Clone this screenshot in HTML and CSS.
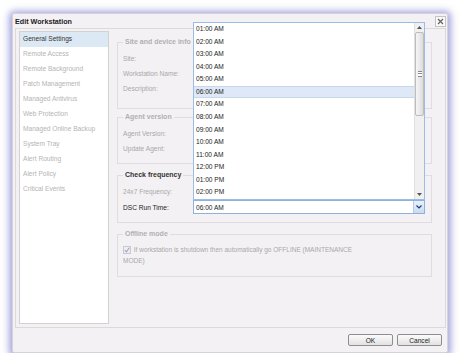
FILE: index.html
```html
<!DOCTYPE html>
<html lang="en">
<head>
    <meta charset="UTF-8">
    <title>Edit Workstation</title>
    <link rel="stylesheet" href="styles.css">
</head>
<body>
    <div class="window">
        <div class="titlebar">
            <span class="title">Edit Workstation</span>
            <span class="close-btn">
                <svg width="7" height="7" viewBox="0 0 7 7"><path d="M1 1 L6 6 M6 1 L1 6" stroke="#666" stroke-width="1.3"/></svg>
            </span>
        </div>

        <div class="dialog-body">
            <ul class="nav">
                <li class="active">General Settings</li>
                <li>Remote Access</li>
                <li>Remote Background</li>
                <li>Patch Management</li>
                <li>Managed Antivirus</li>
                <li>Web Protection</li>
                <li>Managed Online Backup</li>
                <li>System Tray</li>
                <li>Alert Routing</li>
                <li>Alert Policy</li>
                <li>Critical Events</li>
            </ul>

            <div class="content">
                <fieldset class="fs fs-site">
                    <legend>Site and device info</legend>
                    <div class="row">Site:</div>
                    <div class="row">Workstation Name:</div>
                    <div class="row">Description:</div>
                </fieldset>

                <fieldset class="fs fs-agent">
                    <legend>Agent version</legend>
                    <div class="row">Agent Version:</div>
                    <div class="row">Update Agent:</div>
                </fieldset>

                <fieldset class="fs fs-check">
                    <legend>Check frequency</legend>
                    <div class="row row-tall">24x7 Frequency:</div>
                    <div class="row row-combo">
                        <span class="field-label">DSC Run Time:</span>
                        <div class="combo">
                            <span class="combo-value">06:00 AM</span>
                            <span class="combo-trigger">
                                <svg width="6" height="4" viewBox="0 0 6 4"><path d="M0.5 0.5 L3 3 L5.5 0.5" fill="none" stroke="#1e3f7a" stroke-width="1.2"/></svg>
                            </span>
                        </div>
                    </div>
                </fieldset>

                <fieldset class="fs fs-offline">
                    <legend>Offline mode</legend>
                    <div class="check-line">
                        <span class="checkbox">
                            <svg width="6" height="6" viewBox="0 0 6 6"><path d="M0.8 3.2 L2.4 4.8 L5.3 0.8" fill="none" stroke="#9aa7c4" stroke-width="1.1"/></svg>
                        </span>
                        If workstation is shutdown then automatically go OFFLINE (MAINTENANCE MODE)
                    </div>
                </fieldset>
            </div>
        </div>

        <div class="footer">
            <button class="btn">OK</button>
            <button class="btn">Cancel</button>
        </div>

        <div class="picker">
            <ul class="picker-list">
                <li>01:00 AM</li>
                <li>02:00 AM</li>
                <li>03:00 AM</li>
                <li>04:00 AM</li>
                <li>05:00 AM</li>
                <li class="selected">06:00 AM</li>
                <li>07:00 AM</li>
                <li>08:00 AM</li>
                <li>09:00 AM</li>
                <li>10:00 AM</li>
                <li>11:00 AM</li>
                <li>12:00 PM</li>
                <li>01:00 PM</li>
                <li>02:00 PM</li>
            </ul>
            <div class="scrollbar">
                <span class="scroll-arrow">
                    <svg width="5" height="3" viewBox="0 0 5 3"><path d="M0 3 L2.5 0 L5 3 Z" fill="#555"/></svg>
                </span>
                <span class="scroll-thumb"><span class="grip"></span></span>
                <span class="scroll-track"></span>
                <span class="scroll-arrow">
                    <svg width="5" height="3" viewBox="0 0 5 3"><path d="M0 0 L2.5 3 L5 0 Z" fill="#555"/></svg>
                </span>
            </div>
        </div>
    </div>
</body>
</html>
```

FILE: styles.css
```css
body {
    margin: 0;
    background: #ffffff;
    font-family: "Liberation Sans", Arial, sans-serif;
    font-size: 6.6px;
    color: #333;
}
.window {
    position: relative;
    margin: 13px 0 0 12px;
    width: 436px;
    height: 340px;
    box-sizing: border-box;
    border: 1px solid #d6d2dc;
    border-radius: 2px;
    background: #f4f1f4;
    box-shadow: 0 1px 7px 3px rgba(105, 105, 200, 0.6);
}
.titlebar {
    height: 14px;
    display: flex;
    align-items: center;
    justify-content: space-between;
    padding: 0 1px 0 2px;
}
.title {
    font-weight: bold;
    font-size: 7.2px;
    color: #222;
}
.close-btn {
    width: 11px;
    height: 11px;
    box-sizing: border-box;
    border: 1px solid #c4c4c4;
    background: #fafafa;
    display: flex;
    align-items: center;
    justify-content: center;
}
.dialog-body {
    margin: 0 1px 0 2px;
    height: 300px;
    box-sizing: border-box;
    border: 1px solid #dcd8dc;
    padding: 2px 0 3px 3px;
    display: flex;
}
.nav {
    list-style: none;
    margin: 0;
    padding: 0;
    width: 90px;
    box-sizing: border-box;
    border: 1px solid #d2d2d2;
    background: #ffffff;
}
.nav li {
    height: 15px;
    line-height: 13px;
    padding-left: 3px;
    color: #b4b4b4;
}
.nav li.active {
    background: #dde8f5;
    color: #333;
}
.content {
    padding: 6px 0 0 8px;
}
.fs {
    width: 315px;
    box-sizing: border-box;
    margin: 0;
    border: 1px solid #e1dce1;
    padding: 4px 5px 0 5px;
}
.fs legend {
    padding: 0 2px;
    font-size: 7px;
    font-weight: bold;
    line-height: 10px;
    color: #b0b0b0;
}
.fs-site { padding-bottom: 12px; }
.fs-agent { margin-top: 3px; padding-bottom: 7px; }
.fs-check { margin-top: 6px; padding-bottom: 8px; }
.fs-offline { margin-top: 6px; padding-top: 5px; padding-bottom: 10px; }
.fs-check legend { color: #333; }
.row {
    height: 15px;
    line-height: 15px;
    color: #a8a8a8;
}
.row-tall {
    height: 16px;
    line-height: 16px;
}
.row-combo {
    display: flex;
    align-items: center;
    height: 14px;
}
.field-label {
    width: 70px;
    color: #222;
}
.combo {
    width: 232px;
    height: 14px;
    box-sizing: border-box;
    border: 1px solid #8fb1da;
    background: #fff;
    display: flex;
    align-items: center;
}
.combo-value {
    flex: 1;
    padding-left: 2px;
    color: #222;
}
.combo-trigger {
    width: 10px;
    height: 12px;
    border-left: 1px solid #b5cbe8;
    background: linear-gradient(#e9f1fb, #c9dbf1);
    display: flex;
    align-items: center;
    justify-content: center;
}
.check-line {
    max-width: 237px;
    font-size: 6.5px;
    line-height: 11px;
    color: #a8a8a8;
}
.checkbox {
    display: inline-flex;
    align-items: center;
    justify-content: center;
    width: 8px;
    height: 8px;
    box-sizing: border-box;
    border: 1px solid #c8c8d0;
    background: #eeeef2;
    vertical-align: -1px;
    margin-right: 1px;
}
.footer {
    height: 24px;
    display: flex;
    justify-content: flex-end;
    align-items: center;
    gap: 4px;
    padding-right: 5px;
}
.btn {
    width: 45px;
    height: 12px;
    padding: 0;
    border: 1px solid #8e8e8e;
    border-radius: 2px;
    background: linear-gradient(#fbfbfb, #e2e2e2);
    font-family: "Liberation Sans", Arial, sans-serif;
    font-size: 6.6px;
    color: #222;
}
.picker {
    position: absolute;
    left: 180px;
    top: 8px;
    width: 232px;
    height: 178px;
    box-sizing: border-box;
    border: 1px solid #99bce8;
    background: #fff;
    display: flex;
}
.picker-list {
    list-style: none;
    margin: 0;
    padding: 0;
    flex: 1;
}
.picker-list li {
    height: 12.57px;
    line-height: 12.57px;
    padding-left: 2px;
    color: #222;
    box-sizing: border-box;
}
.picker-list li.selected {
    background: #dfe8f6;
    border-top: 1px solid #c6d7ee;
    border-bottom: 1px solid #c6d7ee;
    line-height: 10.57px;
}
.scrollbar {
    width: 9px;
    display: flex;
    flex-direction: column;
    background: #f0f0f0;
    border-left: 1px solid #e0e0e0;
}
.scroll-arrow {
    height: 9px;
    display: flex;
    align-items: center;
    justify-content: center;
}
.scroll-thumb {
    height: 84px;
    box-sizing: border-box;
    border: 1px solid #bdbdbd;
    border-radius: 2px;
    background: linear-gradient(90deg, #f6f6f6, #dcdcdc);
    display: flex;
    align-items: center;
    justify-content: center;
}
.grip {
    width: 4px;
    height: 4px;
    border-top: 1px solid #888;
    border-bottom: 1px solid #888;
    background: linear-gradient(#fff 0 1px, #888 1px 2px, #fff 2px);
}
.scroll-track {
    flex: 1;
}
```
